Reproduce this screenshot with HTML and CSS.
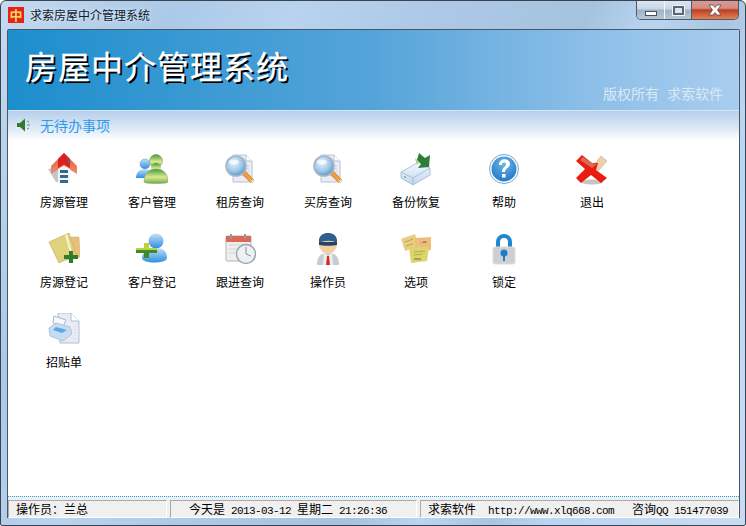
FILE: index.html
```html
<!DOCTYPE html>
<html lang="zh-CN">
<head>
<meta charset="utf-8">
<title>房屋中介管理系统</title>
<link rel="stylesheet" href="styles.css">
</head>
<body>
<svg class="defs" aria-hidden="true">
  <defs>
    <linearGradient id="roof" x1="0" y1="0" x2="0" y2="1"><stop offset="0" stop-color="#e8553a"/><stop offset="1" stop-color="#e8916a"/></linearGradient>
    <radialGradient id="lens" cx=".4" cy=".35" r=".7"><stop offset="0" stop-color="#e4f2fb"/><stop offset=".6" stop-color="#9cc6e6"/><stop offset="1" stop-color="#4e90c8"/></radialGradient>
    <linearGradient id="green" x1="0" y1="0" x2="0" y2="1"><stop offset="0" stop-color="#3f9a3d"/><stop offset=".55" stop-color="#dfe98e"/><stop offset="1" stop-color="#6fae4c"/></linearGradient>
    <linearGradient id="blueP" x1="0" y1="0" x2="0" y2="1"><stop offset="0" stop-color="#c2e0f7"/><stop offset="1" stop-color="#2d8fe0"/></linearGradient>
    <radialGradient id="help" cx=".5" cy=".3" r=".8"><stop offset="0" stop-color="#6fb6e8"/><stop offset="1" stop-color="#1a6fc0"/></radialGradient>
    <linearGradient id="box" x1="0" y1="0" x2="0" y2="1"><stop offset="0" stop-color="#f4f9fe"/><stop offset="1" stop-color="#c3d6ee"/></linearGradient>
    <symbol id="finder" viewBox="0 0 32 32">
      <path d="M9 2h13l6 6v21H9z" fill="#e9edf3" stroke="#b8c2d2"/>
      <path d="M22 2v6h6" fill="#fff" stroke="#b8c2d2"/>
      <path d="M18 13h7M18 16h7M18 19h7M18 22h7" stroke="#c4ccd8"/>
      <path d="M17 20l10 10 3-3-10-10z" fill="#f0a03a" stroke="#c6783a" stroke-width=".7"/>
      <path d="M26 29l3-3 1.500 1.500-2 3z" fill="#e8d8b0"/>
      <circle cx="12" cy="13" r="10" fill="url(#lens)" stroke="#a9b6c6" stroke-width="1.600"/>
      <ellipse cx="10" cy="9" rx="5" ry="2.500" fill="#fff" opacity=".7"/>
    </symbol>
  </defs>
</svg>
<div class="window">
  <header class="titlebar">
    <span class="app-icon">中</span>
    <span class="app-title">求索房屋中介管理系统</span>
    <div class="controls">
      <span class="ctl ctl-min"><i class="glyph-min"></i></span>
      <span class="ctl ctl-max"><i class="glyph-max"></i></span>
      <span class="ctl ctl-close"><svg width="16" height="12" viewBox="0 0 16 12"><path d="M2 1h4l2 2.500L10 1h4l-3.500 5 3.500 5h-4L8 8.500 6 11H2l3.500-5z" fill="#fff" stroke="#5b4a44" stroke-width=".8"/></svg></span>
    </div>
  </header>
  <main class="client">
    <section class="banner">
      <h1 class="banner-title">房屋中介管理系统</h1>
      <p class="banner-copy"><span>版权所有</span><span>求索软件</span></p>
    </section>
    <section class="notice">
      <svg class="speaker" width="15" height="14" viewBox="0 0 15 14"><path d="M0 5h3l5-4.500v13L3 9H0z" fill="#2f7d2a"/><path d="M10 3l2 1M10 7h3M10 11l2-1" stroke="#6a8f68"/></svg>
      <span>无待办事项</span>
    </section>
    <section class="grid">
      <div class="item">
        <svg class="icon" viewBox="0 0 32 32"><path d="M0 16l14-3v16H8z" fill="#b4b7bb" opacity=".8"/><path d="M16 0L3 13v8l13-8 13 8v-8z" fill="url(#roof)"/><path d="M16 0l-6 6v9l6-3.500 6 3.500V6z" fill="#dc1f1f"/><path d="M19 5l4 4-3 1z" fill="#5a6a70"/><path d="M10 16l6-3.500 6 3.500v14H10z" fill="#f2f2f0"/><path d="M12 17h8v3h-8zM12 22h8v3h-8zM12 27h8v3h-8z" fill="#35688f"/></svg>
        <span>房源管理</span>
      </div>
      <div class="item">
        <svg class="icon" viewBox="0 0 32 32"><circle cx="9" cy="11" r="5" fill="url(#blueP)" stroke="#6e9fd0" stroke-width=".6"/><path d="M0 25c0-6 4-9 9-9s7 3 7 9z" fill="url(#blueP)"/><circle cx="20" cy="8" r="6.500" fill="url(#green)" stroke="#7aa36a" stroke-width=".6"/><circle cx="20" cy="15" r="5" fill="url(#green)"/><path d="M8 29c0-9 5-13 12-13s12 4 12 13c0 2-24 2-24 0z" fill="url(#green)" stroke="#8fa88a" stroke-width=".6"/></svg>
        <span>客户管理</span>
      </div>
      <div class="item">
        <svg class="icon"><use href="#finder"/></svg>
        <span>租房查询</span>
      </div>
      <div class="item">
        <svg class="icon"><use href="#finder"/></svg>
        <span>买房查询</span>
      </div>
      <div class="item">
        <svg class="icon" viewBox="0 0 32 32"><path d="M1 19L19 9l11 6v7L13 32 1 25z" fill="url(#box)" stroke="#9db5d4" stroke-width=".8"/><path d="M1 19l12 6v7M13 25l17-10" fill="none" stroke="#9db5d4" stroke-width=".8"/><path d="M4 23l2 1v1l-2-1z" fill="#3a9a4a"/><path d="M19 0l6 5 5-3-1 12-11 1 3-4-4-4z" fill="#2d7d37"/><path d="M15 5l4 4-2 3z" fill="#9fce8a"/></svg>
        <span>备份恢复</span>
      </div>
      <div class="item">
        <svg class="icon" viewBox="0 0 32 32"><circle cx="16" cy="16" r="14.500" fill="#fff" stroke="#6aa9dc"/><circle cx="16" cy="16" r="12.500" fill="url(#help)"/><path d="M11 12c0-8 11-7 11-1 0 4-5 4-5 8h-3c0-5 4-5 4-8 0-2-4-2-4 1z" fill="#fff"/><rect x="14" y="21" width="3.500" height="3.500" fill="#fff"/></svg>
        <span>帮助</span>
      </div>
      <div class="item">
        <svg class="icon" viewBox="0 0 32 32"><ellipse cx="16" cy="29" rx="11" ry="2.500" fill="#c4c4c4"/><path d="M18 12l7-9 6 5-9 10z" fill="#eecfa6" stroke="#a88" stroke-width=".4"/><path d="M0 8l6-6 10 8 6 0-2 7 11 8-6 5-10-8-10 8-5-5 9-9z" fill="#ea1c10"/><path d="M4 7l3-3 9 6 5 1-5 4z" fill="#d86a5a"/></svg>
        <span>退出</span>
      </div>
      <div class="item">
        <svg class="icon" viewBox="0 0 32 32"><path d="M16 4l15 0 1 20-14 3z" fill="#e8c07a" stroke="#c9a860" stroke-width=".5"/><path d="M1 9L21 0l7 22-17 8z" fill="#dfd27a" stroke="#bba94f" stroke-width=".6"/><path d="M17 2l5 18 2-1-5-18z" fill="#fff" opacity=".7"/><path d="M21 18h4v4h5v4h-5v4h-4v-4h-5v-4h5z" fill="#2f7d2a"/></svg>
        <span>房源登记</span>
      </div>
      <div class="item">
        <svg class="icon" viewBox="0 0 32 32"><circle cx="20" cy="8" r="7.500" fill="url(#blueP)"/><path d="M6 25c0-6 6-10 14-10s11 4 11 10-25 6-25 0z" fill="url(#blueP)"/><path d="M8 10h5v5h8v5h-8v5H8v-5H0v-5h8z" fill="#3f8a2a"/><path d="M8 10h5v5H8zM0 15h21v2H0z" fill="#bcd43c"/></svg>
        <span>客户登记</span>
      </div>
      <div class="item">
        <svg class="icon" viewBox="0 0 32 32"><rect x="2" y="3" width="25" height="25" rx="1" fill="#eeeeee" stroke="#b6b6b6"/><path d="M2 3h25v6H2z" fill="#d96a5a"/><rect x="6" y="1" width="2" height="5" fill="#999"/><rect x="20" y="1" width="2" height="5" fill="#999"/><path d="M5 12h14M5 16h10M5 20h8" stroke="#d4d4d4"/><circle cx="22" cy="21" r="9.500" fill="#eef1f4" stroke="#9aa3ad" stroke-width="1.400"/><path d="M22 14v7l5 2" fill="none" stroke="#8a8f96"/></svg>
        <span>跟进查询</span>
      </div>
      <div class="item">
        <svg class="icon" viewBox="0 0 32 32"><path d="M5 32c0-9 4-12 11-12s11 3 11 12z" fill="#c4ccd4"/><path d="M12 20l4 3 4-3 1 12H11z" fill="#eef0f2"/><path d="M15 23h2l1 9h-4z" fill="#d92a20"/><ellipse cx="16" cy="11" rx="9" ry="10" fill="#f3cf9f"/><path d="M7 10C6 2 12 0 16 0s10 2 9 10c-5-3-12-3-18 0z" fill="#2f5f92"/><path d="M7 9h18v3c-4 1-14 1-18 0z" fill="#23456c"/></svg>
        <span>操作员</span>
      </div>
      <div class="item">
        <svg class="icon" viewBox="0 0 32 32"><path d="M1 6l14-5 4 12-14 5z" fill="#eccb85"/><path d="M15 5l16-1 0 13-15 2z" fill="#eebc7d"/><path d="M9 14l20 0 0 0-2 14-16 2z" fill="#dcd56c"/><path d="M5 9l8-3M6 13l7-2M20 10l7-1M14 19l11-1M14 22l9-1" stroke="#a7b24a"/><path d="M23 9l3 0" stroke="#d23c2c"/><path d="M14 26h7" stroke="#666"/></svg>
        <span>选项</span>
      </div>
      <div class="item">
        <svg class="icon" viewBox="0 0 32 32"><path d="M8 15V9a8 8 0 0 1 16 0v6h-4V9a4 4 0 0 0-8 0v6z" fill="#1f87d0"/><rect x="5" y="14" width="22" height="17" rx="2" fill="#cfcfd2" stroke="#dedede"/><circle cx="16" cy="20" r="3.500" fill="#1a7ec8"/><rect x="15" y="21" width="2" height="7" fill="#1a7ec8"/></svg>
        <span>锁定</span>
      </div>
      <div class="item item-newrow">
        <svg class="icon" viewBox="0 0 32 32"><path d="M10 0h13l8 8v22H12z" fill="#e8ecf3" stroke="#b4bfce"/><path d="M23 0v8h8" fill="#fff" stroke="#b4bfce"/><path d="M27 13v14" stroke="#c4ccd8" stroke-dasharray="1 2"/><path d="M6 3l12 4-3 7-10-4z" fill="#f6f8fb" stroke="#a9b9d0"/><path d="M1 15l7-5 14 4 2 7-9 7-13-5z" fill="#c6dcf2" stroke="#9cb4d2" stroke-width=".7"/><path d="M8 14l11 3-5 3-9-3z" fill="#5aa8e4"/></svg>
        <span>招贴单</span>
      </div>
    </section>
    <footer class="status">
      <div class="panel panel-user">操作员：兰总</div>
      <div class="panel panel-date"><span>今天是</span><span class="mono">2013-03-12</span><span>星期二</span><span class="mono">21:26:36</span></div>
      <div class="panel panel-info"><span>求索软件</span><span class="mono link">http://www.xlq668.com</span><span class="qq">咨询<span class="mono">QQ</span></span><span class="mono">151477039</span></div>
    </footer>
  </main>
</div>
</body>
</html>
```

FILE: styles.css
```css
* { box-sizing: border-box; }
html, body { margin: 0; padding: 0; height: 100%; }
body {
  width: 746px;
  height: 526px;
  overflow: hidden;
  background: #fff;
  font-family: "Noto Sans CJK SC", "Liberation Sans", sans-serif;
  font-size: 12px;
  color: #000;
}
.defs { display: block; width: 0; height: 0; }
.window {
  width: 746px;
  height: 526px;
  display: flex;
  flex-direction: column;
  padding: 0 5px 7px 6px;
  border: 1px solid #3a4450;
  border-radius: 6px 6px 2px 2px;
  background:
    linear-gradient(115deg, #c3d9ef 0, #abc9e8 18%, #b9d3ee 30%, #aecae8 42%, #a5c2df 60%, #b9d5f1 67%, #a9c5e0 74%, #bad5f2 80%, #c9dcf3 100%);
}
.titlebar {
  flex: none;
  height: 28px;
  margin: 0 -5px 0 0;
  display: flex;
  align-items: flex-start;
}
.app-icon {
  width: 16px;
  height: 16px;
  margin: 6px 0 0 1px;
  background: #e9201a;
  color: #f0d860;
  font-size: 13px;
  font-weight: 700;
  line-height: 16px;
  text-align: center;
}
.app-title {
  margin: 5px 0 0 6px;
  font-size: 12px;
  line-height: 17px;
  color: #10202c;
  text-shadow: 0 0 4px #e6f1fb;
}
.controls {
  margin-left: auto;
  margin-right: 6px;
  display: flex;
  height: 19px;
  border: 1px solid #4e5a68;
  border-top: 0;
  border-radius: 0 0 5px 5px;
  overflow: hidden;
}
.ctl {
  display: flex;
  align-items: center;
  justify-content: center;
  background: linear-gradient(#dbe6f2 0, #c7d5e4 45%, #9fb0c2 50%, #b8c8d9 100%);
}
.ctl-min { width: 28px; border-right: 1px solid #f2f6fa; }
.ctl-max { width: 27px; border-right: 1px solid #4e5a68; }
.ctl-close {
  width: 46px;
  background: linear-gradient(#d89a94 0, #d88a84 40%, #b6401e 50%, #cf5a34 70%, #e48058 100%);
}
.glyph-min {
  display: block;
  width: 12px;
  height: 5px;
  margin-top: 6px;
  background: #fff;
  border: 1px solid #46525e;
}
.glyph-max {
  display: block;
  width: 11px;
  height: 9px;
  border: 2px solid #5a6672;
  background: #dce6f0;
  box-shadow: 0 0 0 1px #f0f5fa;
}
.client {
  flex: 1;
  min-height: 0;
  display: flex;
  flex-direction: column;
  background: #fff;
  border: 1px solid #4a5866;
  border-bottom: 0;
  border-radius: 2px 2px 0 0;
}
.banner {
  flex: none;
  height: 81px;
  display: flex;
  justify-content: space-between;
  padding: 0 16px 0 17px;
  background: linear-gradient(90deg, #1d8ecd 0, #55a4d9 50%, #8dbfe8 80%, #a9cdee 100%);
  border-bottom: 1px solid #d2e7f5;
}
.banner-title {
  margin: 15px 0 0;
  font-size: 32px;
  font-weight: 400;
  line-height: 40px;
  letter-spacing: 1px;
  color: #fff;
  -webkit-text-stroke: .3px #fff;
  text-shadow: 2px 2px 0 #000;
  white-space: nowrap;
}
.banner-copy {
  display: flex;
  gap: 8px;
  margin: 54px 0 0;
  font-size: 14px;
  line-height: 18px;
  color: #dbe9f4;
  white-space: nowrap;
}
.notice {
  flex: none;
  height: 30px;
  display: flex;
  align-items: center;
  gap: 8px;
  padding: 0 0 2px 9px;
  font-size: 14px;
  line-height: 18px;
  color: #2c9bee;
  background: linear-gradient(#b6d0eb 0, #d8e5f4 50%, #fff 100%);
}
.grid {
  flex: 1;
  min-height: 0;
  align-self: flex-start;
  display: grid;
  grid-template-columns: repeat(7, 88px);
  grid-auto-rows: 80px;
  padding: 12px 0 0 12px;
}
.item {
  display: flex;
  flex-direction: column;
  align-items: center;
  line-height: 16px;
  gap: 9px;
}
.item-newrow { grid-column: 1; }
.icon { display: block; width: 32px; height: 32px; flex: none; }
.status {
  flex: none;
  height: 22px;
  display: flex;
  gap: 3px;
  padding-top: 3px;
  border-top: 1px dotted #1fa3f0;
  background: #f0f0f0;
}
.panel {
  display: flex;
  align-items: baseline;
  height: 18px;
  border: 1px solid #a8a8a8;
  border-right-color: #fff;
  border-bottom-color: #fff;
  white-space: nowrap;
  line-height: 16px;
}
.panel-user { width: 159px; padding-left: 7px; }
.panel-date { width: 247px; padding-left: 18px; gap: 6px; }
.panel-info { flex: 1; padding-left: 7px; }
.mono { font-family: "Liberation Mono", monospace; font-size: 11px; letter-spacing: -.6px; }
.link { margin-left: 12px; }
.qq { margin-left: 18px; margin-right: 6px; }
```
